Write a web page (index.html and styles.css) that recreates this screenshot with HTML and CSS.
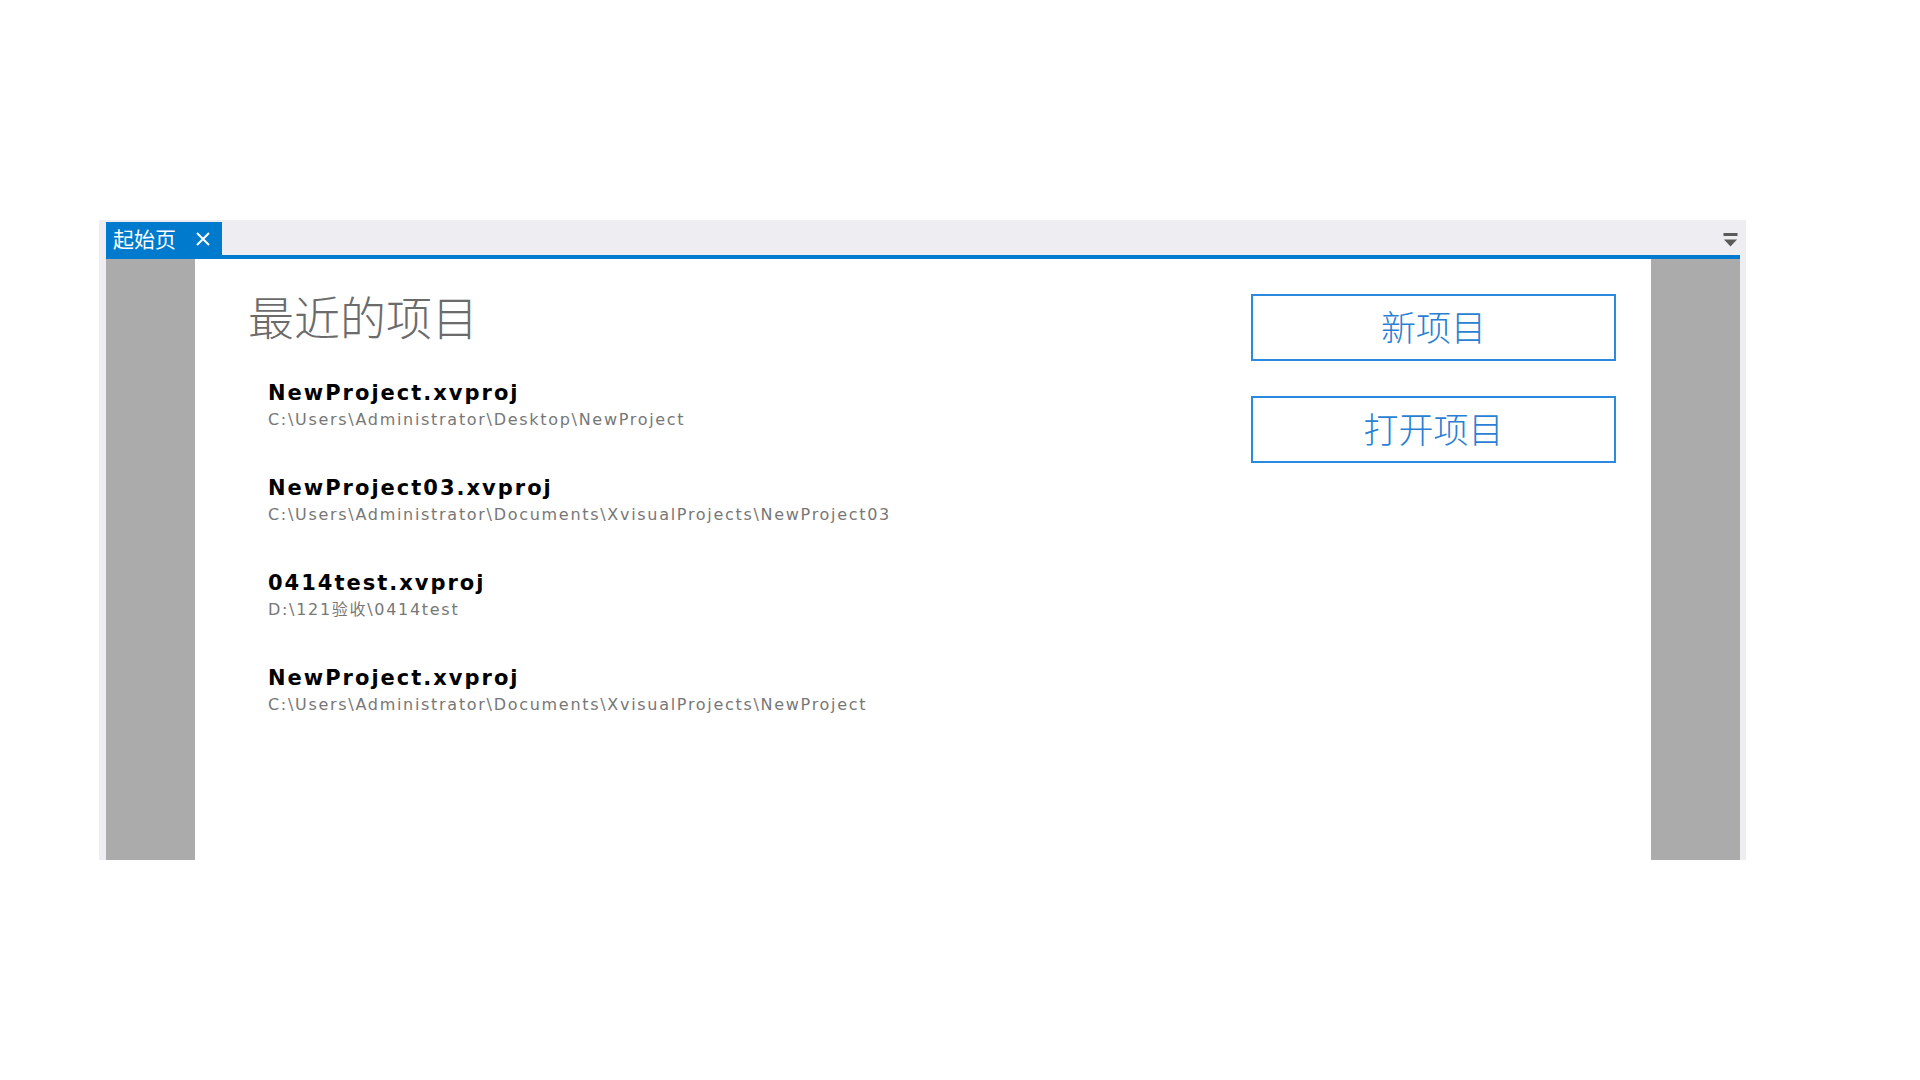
FILE: index.html
```html
<!DOCTYPE html>
<html lang="zh-CN">
<head>
<meta charset="utf-8">
<title>起始页</title>
<link rel="stylesheet" href="styles.css">
</head>
<body>
<div class="frame">
  <div class="tabbar">
    <div class="tab">
      <span class="tab-label">起始页</span>
      <svg class="tab-close" width="16" height="14" viewBox="0 0 16 14"><path d="M2 1 L14 13 M14 1 L2 13" stroke="#fff" stroke-width="2" fill="none"/></svg>
    </div>
    <svg class="tab-menu" width="15" height="14" viewBox="0 0 15 14"><rect x="0.5" y="0" width="14" height="3" fill="#5a5a5a"/><path d="M1 6.5 L14 6.5 L7.5 13.5 Z" fill="#5a5a5a"/></svg>
  </div>
  <div class="accent"></div>
  <div class="content">
    <div class="side side-left"></div>
    <div class="main">
      <div class="recent">
        <h1 class="heading">最近的项目</h1>
        <ul class="projects">
          <li class="project">
            <div class="project-name">NewProject.xvproj</div>
            <div class="project-path">C:\Users\Administrator\Desktop\NewProject</div>
          </li>
          <li class="project">
            <div class="project-name">NewProject03.xvproj</div>
            <div class="project-path">C:\Users\Administrator\Documents\XvisualProjects\NewProject03</div>
          </li>
          <li class="project">
            <div class="project-name">0414test.xvproj</div>
            <div class="project-path">D:\121验收\0414test</div>
          </li>
          <li class="project">
            <div class="project-name">NewProject.xvproj</div>
            <div class="project-path">C:\Users\Administrator\Documents\XvisualProjects\NewProject</div>
          </li>
        </ul>
      </div>
      <div class="actions">
        <button class="action">新项目</button>
        <button class="action">打开项目</button>
      </div>
    </div>
    <div class="side side-right"></div>
  </div>
</div>
</body>
</html>
```
FILE: styles.css
```css
html, body {
  margin: 0;
  padding: 0;
  background: #ffffff;
}
body {
  padding: 220px 0 0 99px;
  font-family: "Noto Sans CJK SC", "DejaVu Sans", sans-serif;
}
.frame {
  width: 1647px;
  box-sizing: border-box;
  padding: 0 6px 0 7px;
  background: #eeeef2;
}
.tabbar {
  height: 35px;
  display: flex;
  align-items: flex-end;
  justify-content: space-between;
}
.tab {
  height: 33px;
  width: 116px;
  box-sizing: border-box;
  background: #007acc;
  display: flex;
  align-items: center;
  padding-left: 7px;
}
.tab-label {
  color: #ffffff;
  font-size: 21px;
  line-height: 33px;
  font-family: "Noto Sans CJK SC", sans-serif;
}
.tab-close {
  margin-left: 19px;
}
.tab-menu {
  align-self: center;
  margin-right: 2px;
  margin-top: 4px;
}
.accent {
  height: 4px;
  background: #007acc;
}
.content {
  display: flex;
  height: 601px;
}
.side {
  background: #ababab;
}
.side-left {
  width: 89px;
}
.side-right {
  width: 89px;
}
.main {
  flex: 1;
  background: #ffffff;
  display: flex;
  justify-content: space-between;
}
.recent {
  padding: 34px 0 0 53px;
}
.heading {
  margin: 0;
  font-size: 46px;
  line-height: 45px;
  font-weight: 300;
  color: #6b6b6b;
  font-family: "Noto Sans CJK SC", sans-serif;
}
.projects {
  list-style: none;
  margin: 42px 0 0 0;
  padding: 0 0 0 20px;
  display: flex;
  flex-direction: column;
  gap: 44px;
}
.project-name {
  font-family: "DejaVu Sans", sans-serif;
  font-weight: bold;
  font-size: 21px;
  letter-spacing: 2px;
  line-height: 26px;
  color: #000000;
}
.project-path {
  margin-top: 3px;
  font-family: "DejaVu Sans", "Noto Sans CJK SC", sans-serif;
  font-size: 16px;
  letter-spacing: 1.7px;
  line-height: 22px;
  color: #777777;
}
.actions {
  padding: 35px 35px 0 0;
  display: flex;
  flex-direction: column;
  gap: 35px;
}
.action {
  width: 365px;
  height: 67px;
  box-sizing: border-box;
  border: 2px solid #2a8ae0;
  background: #ffffff;
  color: #2a7fd4;
  font-family: "Noto Sans CJK SC", sans-serif;
  font-size: 35px;
  font-weight: 300;
  padding: 0 0 5px 0;
  margin: 0;
}
```
